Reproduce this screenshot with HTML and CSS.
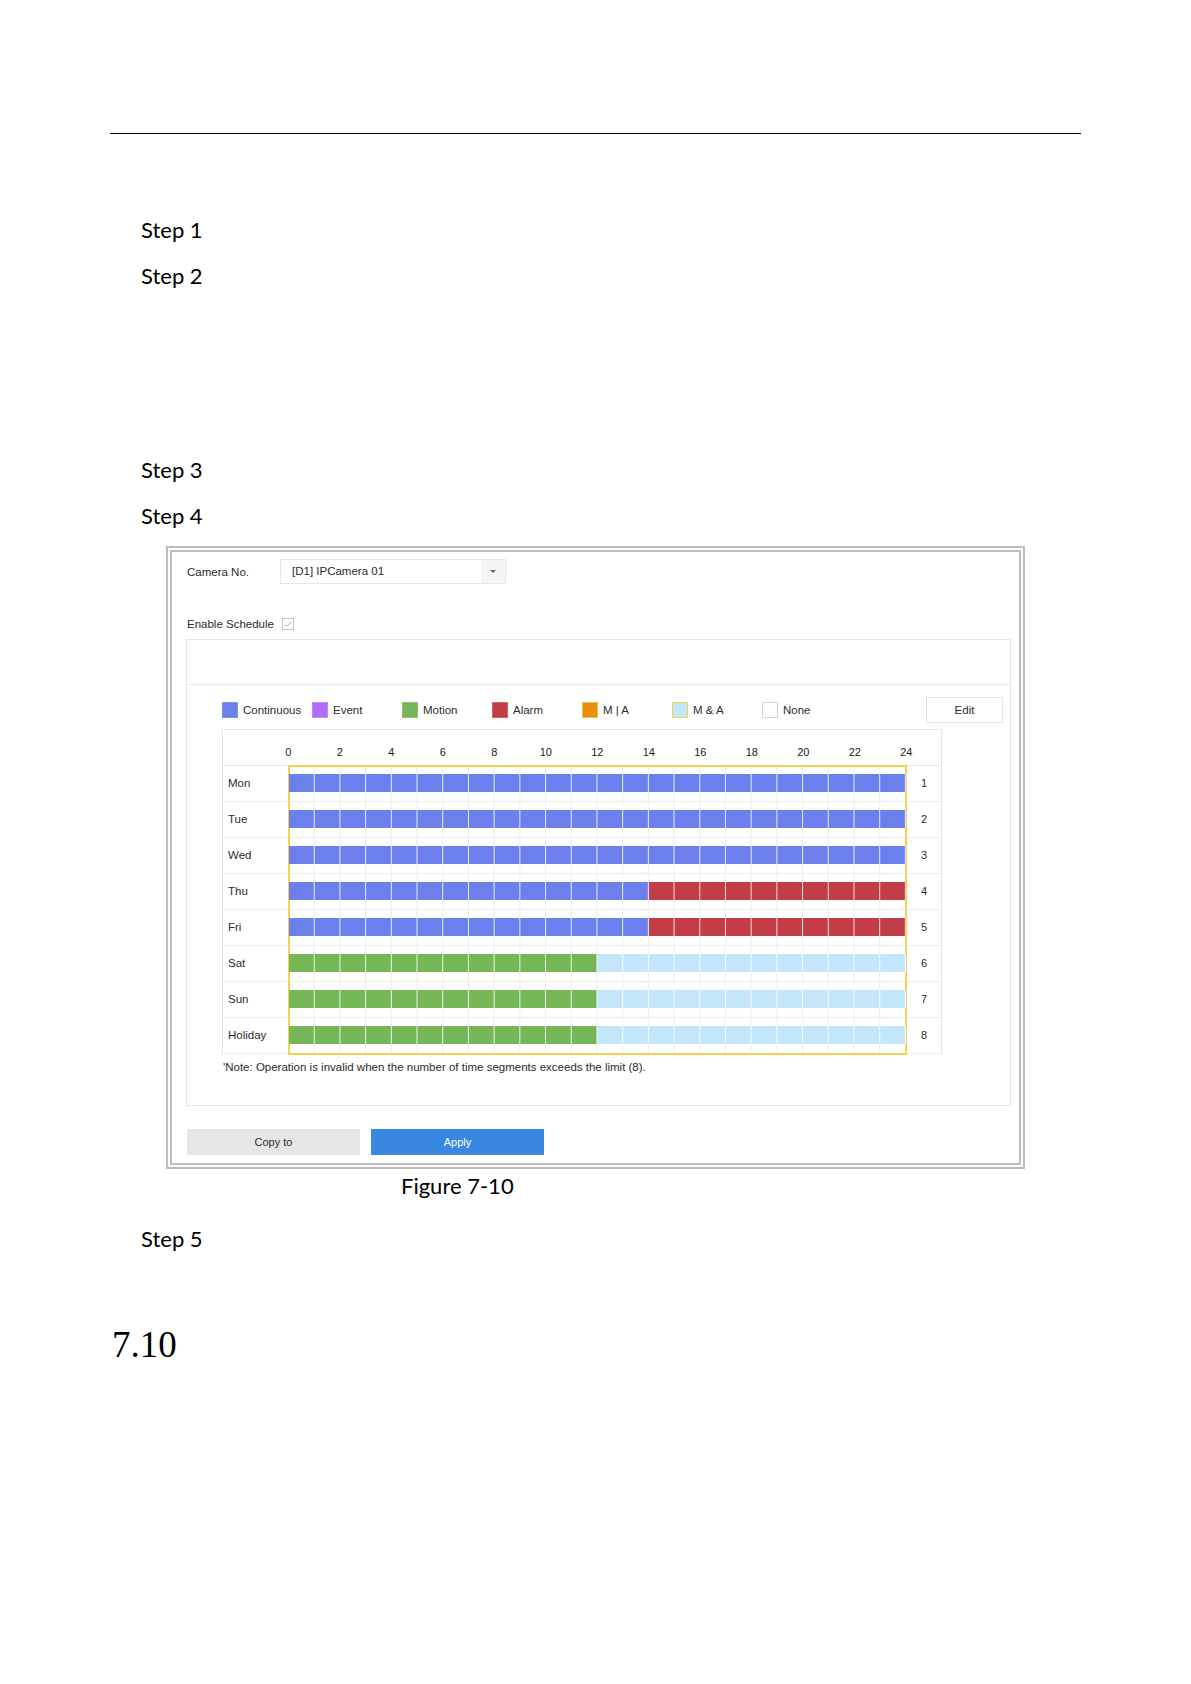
FILE: index.html
```html
<!DOCTYPE html>
<html>
<head>
<link rel="stylesheet" href="styles.css">
</head>
<body>
<div class="page">
  <div class="rule"></div>

  <p class="step step-first">Step 1</p>
  <p class="step">Step 2</p>
  <p class="step step-gap">Step 3</p>
  <p class="step">Step 4</p>

  <div class="figure">
    <div class="field-row">
      <div class="field-label">Camera No.</div>
      <div class="select">
        <div class="select-value">[D1] IPCamera 01</div>
        <div class="select-arrow"><span class="caret"></span></div>
      </div>
    </div>

    <div class="check-row">
      <span>Enable Schedule</span>
      <svg class="checkbox" width="12" height="12" viewBox="0 0 12 12">
        <rect x="0.5" y="0.5" width="11" height="11" fill="#fff" stroke="#c4c4c4"/>
        <polyline points="2.8,6.2 5,8.4 9.4,3.4" fill="none" stroke="#9fb3c8" stroke-width="1"/>
      </svg>
    </div>

    <div class="panel">
      <div class="panel-head"></div>

      <div class="legend">
        <div class="legend-item"><span class="swatch continuous"></span>Continuous</div>
        <div class="legend-item"><span class="swatch event"></span>Event</div>
        <div class="legend-item"><span class="swatch motion"></span>Motion</div>
        <div class="legend-item"><span class="swatch alarm"></span>Alarm</div>
        <div class="legend-item"><span class="swatch m-or-a"></span>M | A</div>
        <div class="legend-item"><span class="swatch m-and-a"></span>M &amp; A</div>
        <div class="legend-item"><span class="swatch none"></span>None</div>
        <button class="btn-edit">Edit</button>
      </div>

      <div class="sched">
        <div class="sched-head">
          <div class="day-col"></div>
          <div class="axis-wrap">
            <div class="axis">
              <span>0</span><span>2</span><span>4</span><span>6</span><span>8</span><span>10</span><span>12</span>
              <span>14</span><span>16</span><span>18</span><span>20</span><span>22</span><span>24</span>
            </div>
          </div>
          <div class="num-col"></div>
        </div>

        <div class="sched-body">
          <div class="day-col">
            <div class="cell day">Mon</div>
            <div class="cell day">Tue</div>
            <div class="cell day">Wed</div>
            <div class="cell day">Thu</div>
            <div class="cell day">Fri</div>
            <div class="cell day">Sat</div>
            <div class="cell day">Sun</div>
            <div class="cell day">Holiday</div>
          </div>

          <div class="timeline">
            <div class="track"><div class="bar"><div class="seg continuous" style="width:100%"></div></div></div>
            <div class="track"><div class="bar"><div class="seg continuous" style="width:100%"></div></div></div>
            <div class="track"><div class="bar"><div class="seg continuous" style="width:100%"></div></div></div>
            <div class="track"><div class="bar"><div class="seg continuous" style="width:58.3333%"></div><div class="seg alarm" style="width:41.6667%"></div></div></div>
            <div class="track"><div class="bar"><div class="seg continuous" style="width:58.3333%"></div><div class="seg alarm" style="width:41.6667%"></div></div></div>
            <div class="track"><div class="bar"><div class="seg motion" style="width:50%"></div><div class="seg m-and-a" style="width:50%"></div></div></div>
            <div class="track"><div class="bar"><div class="seg motion" style="width:50%"></div><div class="seg m-and-a" style="width:50%"></div></div></div>
            <div class="track"><div class="bar"><div class="seg motion" style="width:50%"></div><div class="seg m-and-a" style="width:50%"></div></div></div>
          </div>

          <div class="num-col">
            <div class="cell num">1</div>
            <div class="cell num">2</div>
            <div class="cell num">3</div>
            <div class="cell num">4</div>
            <div class="cell num">5</div>
            <div class="cell num">6</div>
            <div class="cell num">7</div>
            <div class="cell num">8</div>
          </div>
        </div>
      </div>

      <div class="note">'Note: Operation is invalid when the number of time segments exceeds the limit (8).</div>
    </div>

    <div class="actions">
      <button class="btn btn-copy">Copy to</button>
      <button class="btn btn-apply">Apply</button>
    </div>
  </div>

  <p class="caption">Figure 7-10</p>
  <p class="step step-five">Step 5</p>
  <h2 class="section">7.10</h2>
</div>
</body>
</html>
```

FILE: styles.css
```css
* {
  box-sizing: border-box;
}

body {
  margin: 0;
  background: #fff;
  color: #000;
  font-family: Lato, "Open Sans", sans-serif;
}

.page {
  width: 1191px;
  padding-bottom: 200px;
}

.rule {
  margin-left: 110px;
  width: 971px;
  height: 134px;
  border-bottom: 1px solid #000;
}

.step {
  margin: 0;
  padding-left: 141px;
  font-size: 22px;
  line-height: 46px;
}

.step-first {
  margin-top: 73px;
}

.step-gap {
  margin-top: 148px;
}

.step-five {
  margin-top: 15px;
}

.caption {
  margin: 2px 0 0;
  padding-left: 401px;
  font-size: 22px;
  line-height: 30px;
}

.section {
  margin: 58px 0 0 112px;
  font-family: "Liberation Serif", serif;
  font-weight: normal;
  font-size: 37px;
  line-height: 50px;
}

/* screenshot frame */
.figure {
  margin: 7px 0 0 166px;
  width: 859px;
  border: 6px double #bdbdbd;
  padding: 7px 0 8px 14px;
  font-family: "Liberation Sans", Arial, sans-serif;
  font-size: 11.5px;
  color: #2b2b2b;
}

.field-row {
  display: flex;
  align-items: center;
  height: 25px;
}

.field-label {
  width: 94px;
  padding-left: 1px;
}

.select {
  display: flex;
  width: 226px;
  height: 25px;
  border: 1px solid #e6e6e6;
}

.select-value {
  flex: 1;
  padding-left: 11px;
  line-height: 23px;
}

.select-arrow {
  width: 24px;
  background: #f5f5f5;
  display: flex;
  align-items: center;
  justify-content: center;
}

.caret {
  width: 0;
  height: 0;
  border-left: 3px solid transparent;
  border-right: 3px solid transparent;
  border-top: 3px solid #666;
}

.check-row {
  display: flex;
  align-items: center;
  gap: 8px;
  height: 20px;
  margin-top: 30px;
  padding-left: 1px;
}

.panel {
  margin-top: 5px;
  width: 825px;
  border: 1px solid #e6e6e6;
  padding: 0 0 31px 35px;
}

.panel-head {
  height: 45px;
  margin-left: -35px;
  border-bottom: 1px solid #e8e8e8;
}

.legend {
  display: flex;
  align-items: center;
  height: 26px;
  margin: 12px 0 6px;
  padding-right: 7px;
}

.legend-item {
  display: flex;
  align-items: center;
  width: 90px;
  gap: 5px;
}

.swatch {
  width: 16px;
  height: 16px;
  border: 1px solid transparent;
}

.swatch.continuous { background: #6b80ec; border-color: #7f92ef; }
.swatch.event { background: #b06ef6; border-color: #c08af7; }
.swatch.motion { background: #75b657; border-color: #8cc270; }
.swatch.alarm { background: #c33d47; border-color: #d0636b; }
.swatch.m-or-a { background: #e88f0b; border-color: #ecc057; }
.swatch.m-and-a { background: #c3e6fa; border-color: #f1d44c; }
.swatch.none { background: #fff; border-color: #d4d4d4; }

.btn-edit {
  margin-left: auto;
  width: 77px;
  height: 26px;
  border: 1px solid #e2e2e2;
  background: #fff;
  font: inherit;
  color: #2b2b2b;
}

/* schedule table */
.sched {
  width: 720px;
  border: 1px solid #e6e6e6;
  border-bottom: none;
}

.sched-head {
  display: flex;
  height: 36px;
  border-bottom: 1px solid #e6e6e6;
}

.day-col {
  width: 66px;
}

.num-col {
  width: 35px;
}

.axis-wrap {
  width: 618px;
}

.axis {
  display: flex;
  margin-left: -25.75px;
  padding-top: 16px;
  font-size: 11px;
  color: #1a1a1a;
}

.axis span {
  flex: none;
  width: 51.5px;
  text-align: center;
}

.sched-body {
  display: flex;
}

.cell {
  height: 36px;
  border-bottom: 1px solid #ebebeb;
  line-height: 35px;
}

.day {
  padding-left: 5px;
}

.num {
  text-align: center;
  font-size: 11px;
  padding-left: 1px;
}

.timeline {
  width: 618px;
  outline: 2px solid #f2d24e;
  outline-offset: -1px;
}

.track {
  height: 36px;
  border-bottom: 1px solid #ebebeb;
  padding-top: 8px;
  background-image: linear-gradient(to right, transparent calc(100% - 1px), #ededed calc(100% - 1px));
  background-size: calc(100% / 24) 100%;
}

.bar {
  position: relative;
  display: flex;
  height: 18px;
}

.bar::after {
  content: "";
  position: absolute;
  inset: 0;
  background-image: linear-gradient(to right, transparent calc(100% - 1px), rgba(255, 255, 255, 0.85) calc(100% - 1px));
  background-size: calc(100% / 24) 100%;
}

.seg {
  height: 100%;
}

.seg.continuous { background: #6b80ec; }
.seg.alarm { background: #c33d47; }
.seg.motion { background: #75b657; }
.seg.m-and-a { background: #c3e6fa; }

.note {
  margin-top: 6px;
  font-size: 11.5px;
  line-height: 14px;
  padding-left: 1px;
}

.actions {
  display: flex;
  gap: 11px;
  margin-top: 23px;
  padding-left: 1px;
}

.btn {
  width: 173px;
  height: 26px;
  border: none;
  font: inherit;
  font-size: 11px;
}

.btn-copy {
  background: #e6e6e6;
  color: #2b2b2b;
}

.btn-apply {
  background: #3a87e2;
  color: #fff;
}
```
